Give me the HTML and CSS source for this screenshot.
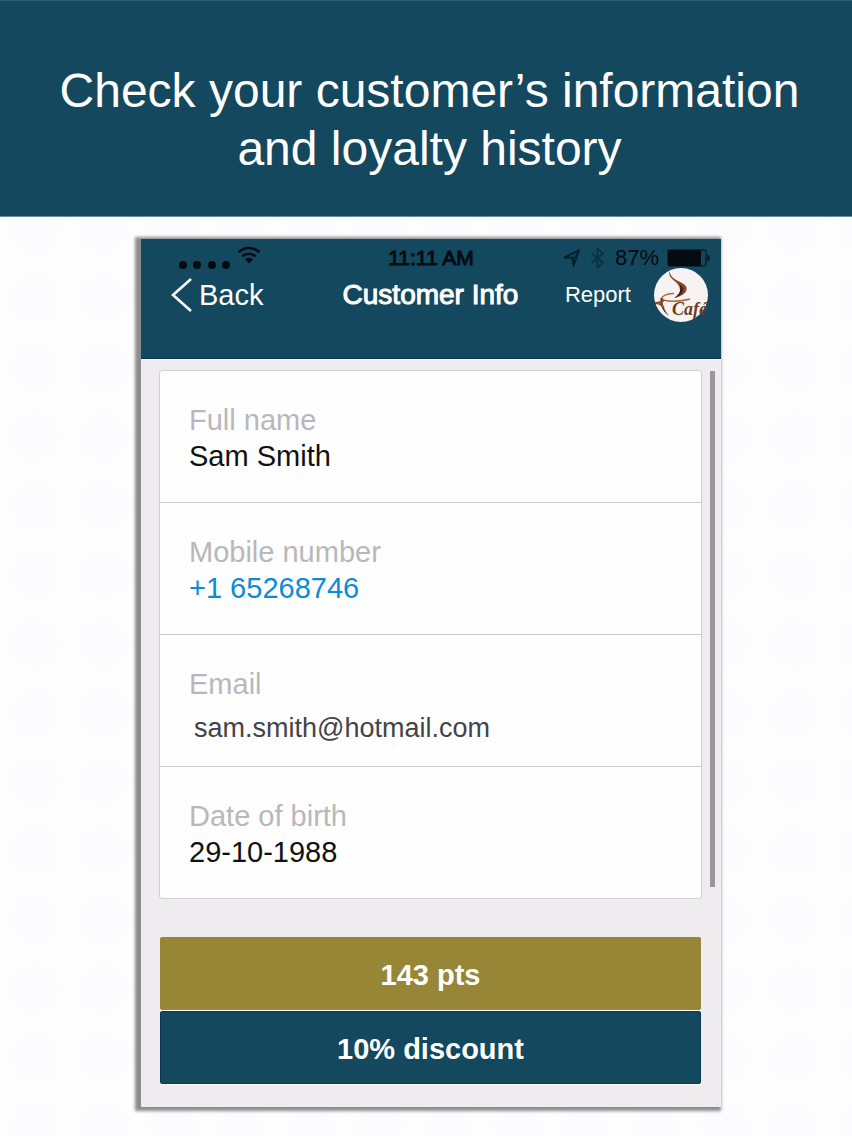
FILE: index.html
```html
<!DOCTYPE html>
<html lang="en">
<head>
    <meta charset="UTF-8">
    <meta name="viewport" content="width=device-width, initial-scale=1.0">
    <title>Customer Info</title>
    <link rel="stylesheet" href="styles.css">
</head>
<body>
    <header class="banner">
        <h1>Check your customer’s information<br>and loyalty history</h1>
    </header>
    <main class="stage">
        <div class="phone">
            <div class="top">
                <div class="status">
                    <div class="signal">
                        <svg class="dots" width="52" height="10" viewBox="0 0 52 10">
                            <circle cx="4" cy="5" r="4"/>
                            <circle cx="18" cy="5" r="4"/>
                            <circle cx="33" cy="5" r="4"/>
                            <circle cx="47" cy="5" r="4"/>
                        </svg>
                        <svg width="24" height="18" viewBox="0 0 24 18">
                            <path d="M1.6 6.2a15 15 0 0 1 20.8 0M5.4 10.4a9.6 9.6 0 0 1 13.2 0" fill="none" stroke="#040b10" stroke-width="2.6"/>
                            <path d="M8 13.3a6 6 0 0 1 8 0L12 17.4z"/>
                        </svg>
                    </div>
                    <span class="time">11:11 AM</span>
                    <div class="power">
                        <svg width="19" height="18" viewBox="0 0 19 18">
                            <path d="M2 8.6L17 1.3 11.6 16.2 10.3 8.8z" fill="none" stroke="#06202c" stroke-width="2"/>
                            <path d="M17 1.3L11.6 16.2 10.3 8.8z" fill="#06202c" fill-opacity="0.5"/>
                        </svg>
                        <svg class="bluetooth" width="15" height="22" viewBox="0 0 15 22">
                            <path d="M1.5 6L13 15.5 7.5 20.5V1.5L13 6.5 1.5 16" fill="none" stroke="#0b3041" stroke-width="1.8"/>
                        </svg>
                        <span>87%</span>
                        <svg class="battery" width="44" height="18" viewBox="0 0 44 18">
                            <rect x="1" y="1" width="38" height="16" rx="2" fill="none" stroke="#07202b" stroke-width="1.5"/>
                            <rect x="1" y="1" width="33" height="16" rx="1"/>
                            <path d="M40.5 5.5a4 4 0 0 1 0 7z"/>
                        </svg>
                    </div>
                </div>
                <nav class="bar">
                    <button class="back" type="button">
                        <svg width="22" height="36" viewBox="0 0 22 36">
                            <path d="M20 2L2 18 20 34" fill="none" stroke="#fff" stroke-width="2.6"/>
                        </svg>
                        Back
                    </button>
                    <h2>Customer Info</h2>
                    <div class="actions">
                        <button class="report" type="button">Report</button>
                        <svg class="logo" width="54" height="54" viewBox="0 0 54 54">
                            <circle cx="27" cy="27" r="27" fill="#f6f3f2"/>
                            <path d="M15.500 3C13 12 27 13 26 23C26 26 24 28 20 30C34 27 36 19 28 15C22 12 16 9 15.500 3z" fill="#84492a"/>
                            <path d="M25 16C32 20 30 27 20 30C26 26 28 21 25 16z" fill="#3f2013"/>
                            <path d="M36 31C26 34 9 34 8 30.500C8 27.500 14 25.500 20 25.500" fill="none" stroke="#a5693f" stroke-width="1.500"/>
                            <path d="M8 30C8.500 38 11 43 15 48C8 43 6 37 6.500 30z" fill="#5f321c"/>
                            <path d="M1 35C5 35 8 34 10 32M1 35C5 35 8 37 10 40" fill="none" stroke="#8d4e28" stroke-width="1.800"/>
                            <text class="logo-text" x="18" y="47">Café</text>
                        </svg>
                    </div>
                </nav>
            </div>
            <div class="content">
                <dl class="card">
                    <div class="item">
                        <dt>Full name</dt>
                        <dd>Sam Smith</dd>
                    </div>
                    <div class="item">
                        <dt>Mobile number</dt>
                        <dd><a href="tel:+165268746">+1 65268746</a></dd>
                    </div>
                    <div class="item">
                        <dt>Email</dt>
                        <dd class="email">sam.smith@hotmail.com</dd>
                    </div>
                    <div class="item">
                        <dt>Date of birth</dt>
                        <dd>29-10-1988</dd>
                    </div>
                </dl>
                <div class="scroll"></div>
                <div class="loyalty">
                    <button class="points" type="button">143 pts</button>
                    <button class="discount" type="button">10% discount</button>
                </div>
            </div>
        </div>
    </main>
</body>
</html>
```

FILE: styles.css
```css
* {
    box-sizing: border-box;
}
body {
    margin: 0;
    font-family: "Liberation Sans", Arial, sans-serif;
    background-color: #fefefe;
    background-image: radial-gradient(circle, #fcfbfd 20px, transparent 30px);
    background-size: 69px 69px;
    background-position: 0 -12px;
}
button {
    padding: 0;
    border: 0;
    background: none;
    color: #fff;
    font-family: inherit;
    cursor: pointer;
}
.banner {
    padding: 61px 0 38px 7px;
    background: #13485e;
    border-top: 1px solid #2f5f75;
    border-bottom: 1px solid #6c8b9b;
    color: #fff;
    text-align: center;
}
.banner h1 {
    margin: 0;
    font-size: 48px;
    font-weight: normal;
    line-height: 58px;
}
.stage {
    padding: 22px 131px 29px 141px;
}
.phone {
    background: #eeecee;
    box-shadow: -3px 1px 3px 3px #8c8c8c;
}
.top {
    padding: 5px 13px 40px 30px;
    background: #13485e;
    border-bottom: 1px solid #08354a;
}
.status {
    display: grid;
    grid-template-columns: 1fr auto 1fr;
    align-items: center;
    height: 28px;
    margin-right: -3px;
    color: #040b10;
    fill: #040b10;
    font-size: 21px;
}
.signal {
    display: flex;
    align-items: flex-start;
    gap: 6px;
    padding-left: 8px;
}
.dots {
    margin-top: 14px;
}
.time {
    margin-right: 20px;
    -webkit-text-stroke: 1px #040b10;
}
.power {
    display: flex;
    align-items: center;
    justify-content: flex-end;
    font-size: 22px;
}
.bluetooth {
    margin: 0 10px 0 9px;
}
.battery {
    margin-left: 8px;
}
.bar {
    display: grid;
    grid-template-columns: 1fr auto 1fr;
    grid-template-rows: 46px;
    align-items: center;
}
.back {
    display: flex;
    align-items: center;
    justify-self: start;
    gap: 6px;
    font-size: 29px;
}
.bar h2 {
    margin: 0 18px 0 0;
    color: #fff;
    font-size: 28px;
    font-weight: normal;
    -webkit-text-stroke: 1px #fff;
}
.actions {
    display: flex;
    align-items: center;
    justify-content: flex-end;
    gap: 23px;
}
.report {
    font-size: 22px;
}
.logo-text {
    fill: #713a1c;
    font-family: "Liberation Serif", serif;
    font-size: 18px;
    font-style: italic;
    font-weight: bold;
}
.content {
    position: relative;
    padding: 10px 20px 23px 18px;
    border-top: 1px solid #fff;
}
.card {
    margin: 0 -1px 38px 0;
    background: #fefefe;
    border: 1px solid #d2d0d3;
    border-radius: 3px;
}
.item {
    padding: 31px 29px 28px;
    font-size: 29px;
    line-height: 36px;
}
.item + .item {
    border-top: 1px solid #c9c7ca;
}
.item dt {
    color: #b9b7bc;
}
.item dd {
    margin: 0;
    color: #111;
}
.item a {
    color: #0d8bd9;
    text-decoration: none;
}
.item .email {
    margin-bottom: -8px;
    padding: 8px 0 0 5px;
    color: #444347;
    font-size: 27px;
}
/* scroll indicator on the right edge */
.scroll {
    position: absolute;
    top: 11px;
    right: 6px;
    bottom: 220px;
    width: 5px;
    background: #98979b;
}
.loyalty {
    display: flex;
    flex-direction: column;
    gap: 1px;
    padding-left: 1px;
}
.loyalty button {
    height: 73px;
    padding-top: 3px;
    border-radius: 2px;
    font-size: 29px;
    font-weight: bold;
    box-shadow: 0 1px 1px #fff;
}
.loyalty .points {
    background: #968636;
}
.loyalty .discount {
    background: #13485e;
    border: 1px solid #0b3a50;
}
```
